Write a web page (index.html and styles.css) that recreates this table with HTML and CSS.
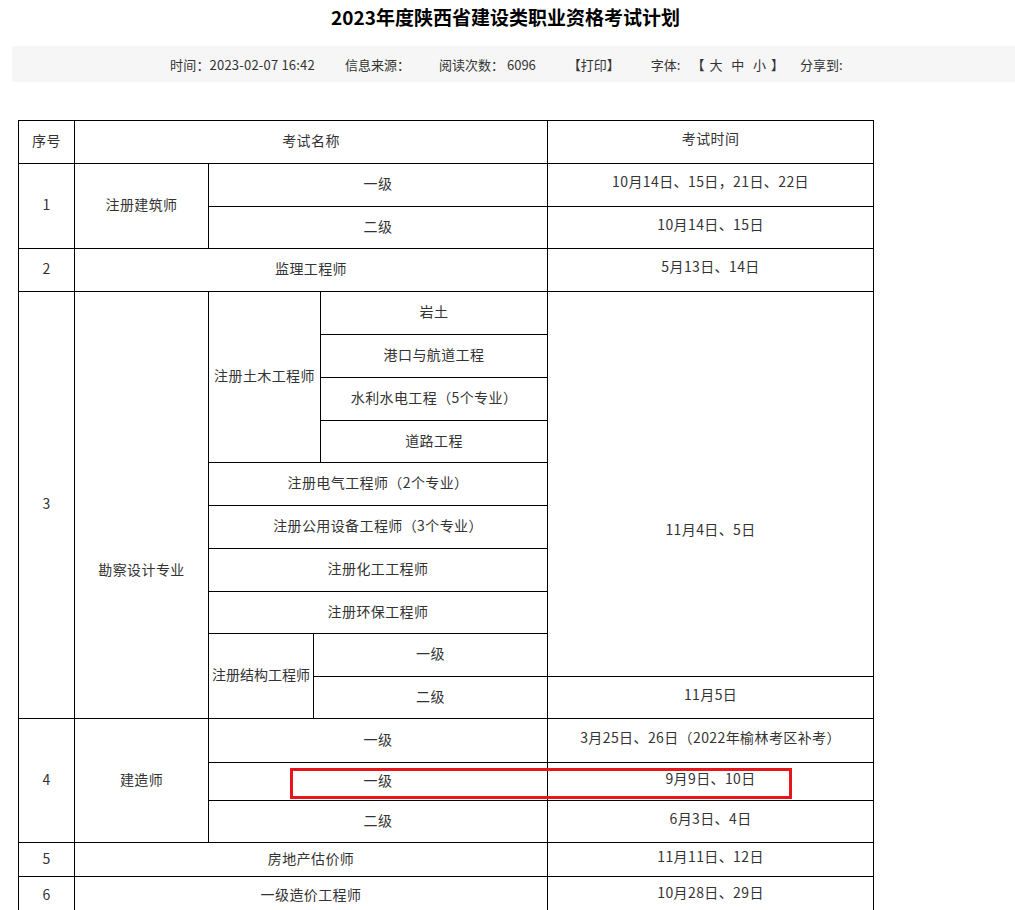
FILE: index.html
```html
<!DOCTYPE html>
<html lang="zh-CN">
<head>
<meta charset="utf-8">
<title>2023年度陕西省建设类职业资格考试计划</title>
<link rel="stylesheet" href="styles.css">
</head>
<body>
<div class="page">
  <h1 class="title">2023年度陕西省建设类职业资格考试计划</h1>
  <div class="meta">
    <span class="m-time">时间：2023-02-07 16:42</span>
    <span class="m-src">信息来源：</span>
    <span class="m-read">阅读次数：<span class="num">6096</span></span>
    <span class="m-print">【打印】</span>
    <span class="m-font">字体:<span class="sizes">【 大&nbsp;&nbsp;中&nbsp;&nbsp;小 】</span></span>
    <span class="m-share">分享到:</span>
  </div>
  <div class="table-wrap">
    <table class="plan">
      <colgroup>
        <col class="c1"><col class="c2"><col class="c3"><col class="c4"><col class="c5"><col class="c6">
      </colgroup>
      <tbody>
        <tr class="h43"><td>序号</td><td colspan="4">考试名称</td><td class="t">考试时间</td></tr>
        <tr class="h43"><td rowspan="2">1</td><td rowspan="2">注册建筑师</td><td colspan="3">一级</td><td class="t">10月14日、15日，21日、22日</td></tr>
        <tr class="h42"><td colspan="3">二级</td><td class="t">10月14日、15日</td></tr>
        <tr class="h43"><td>2</td><td colspan="4">监理工程师</td><td class="t">5月13日、14日</td></tr>
        <tr class="h43"><td rowspan="10">3</td><td rowspan="10" class="kc">勘察设计专业</td><td rowspan="4" colspan="2">注册土木工程师</td><td>岩土</td><td rowspan="9" class="t nov">11月4日、5日</td></tr>
        <tr class="h43"><td>港口与航道工程</td></tr>
        <tr class="h43"><td>水利水电工程（5个专业）</td></tr>
        <tr class="h42"><td>道路工程</td></tr>
        <tr class="h43"><td colspan="3">注册电气工程师（2个专业）</td></tr>
        <tr class="h43"><td colspan="3">注册公用设备工程师（3个专业）</td></tr>
        <tr class="h43"><td colspan="3">注册化工工程师</td></tr>
        <tr class="h42"><td colspan="3">注册环保工程师</td></tr>
        <tr class="h43"><td rowspan="2" class="tight">注册结构工程师</td><td colspan="2">一级</td></tr>
        <tr class="h42"><td colspan="2">二级</td><td class="t">11月5日</td></tr>
        <tr class="h44"><td rowspan="3">4</td><td rowspan="3">建造师</td><td colspan="3">一级</td><td class="t">3月25日、26日（2022年榆林考区补考）</td></tr>
        <tr class="h38"><td colspan="3">一级</td><td class="t">9月9日、10日</td></tr>
        <tr class="h42"><td colspan="3">二级</td><td class="t">6月3日、4日</td></tr>
        <tr class="h34"><td>5</td><td colspan="4">房地产估价师</td><td class="t">11月11日、12日</td></tr>
        <tr class="h39"><td>6</td><td colspan="4">一级造价工程师</td><td class="t">10月28日、29日</td></tr>
      </tbody>
    </table>
    <div class="mark"></div>
  </div>
</div>
</body>
</html>
```
FILE: styles.css
```css
html, body {
  margin: 0;
  padding: 0;
  background: #fff;
}
body {
  font-family: "Noto Sans CJK SC", "Noto Sans", sans-serif;
  color: #333;
}
.page {
  width: 1015px;
}
.title {
  margin: 0;
  height: 36px;
  line-height: 33px;
  font-size: 19px;
  font-weight: bold;
  color: #000;
  text-align: center;
  padding-right: 4px;
}
.meta {
  margin: 10px 0 0 12px;
  height: 36px;
  background: #f6f6f6;
  display: flex;
  align-items: center;
  font-size: 13px;
  color: #333;
  padding-left: 158px;
}
.meta > span { white-space: nowrap; }
.m-time { letter-spacing: 0.2px; }
.m-src { margin-left: 30px; }
.m-read { margin-left: 29px; }
.m-read .num { margin-left: 3px; }
.m-print { margin-left: 32px; }
.m-font { margin-left: 31px; }
.m-font .sizes { margin-left: 11px; letter-spacing: 1px; }
.m-share { margin-left: 15px; }

.table-wrap {
  position: relative;
  margin: 38px 0 0 18px;
  width: 855px;
}
.plan {
  border-collapse: collapse;
  table-layout: fixed;
  width: 855px;
  font-size: 14px;
  color: #333;
  letter-spacing: 0.4px;
}
.plan col.c1 { width: 56px; }
.plan col.c2 { width: 134px; }
.plan col.c3 { width: 105px; }
.plan col.c4 { width: 7px; }
.plan col.c5 { width: 227px; }
.plan col.c6 { width: 326px; }
.plan td {
  border: 1px solid #000;
  text-align: center;
  vertical-align: middle;
  padding: 0 1px 4px;
  line-height: 20px;
  white-space: nowrap;
}
.plan td.tight { padding: 0 0 4px; letter-spacing: 0; }
.plan td.t { padding-bottom: 8px; }
.plan td.kc { padding-top: 131px; }
.plan td.nov { padding-top: 97px; }
.h43 { height: 43px; }
.h42 { height: 42px; }
.h44 { height: 44px; }
.h38 { height: 38px; }
.h34 { height: 34px; }
.h39 { height: 39px; }

.mark {
  position: absolute;
  left: 272px;
  top: 648px;
  width: 496px;
  height: 25px;
  border: 3px solid #e8161b;
}
```
